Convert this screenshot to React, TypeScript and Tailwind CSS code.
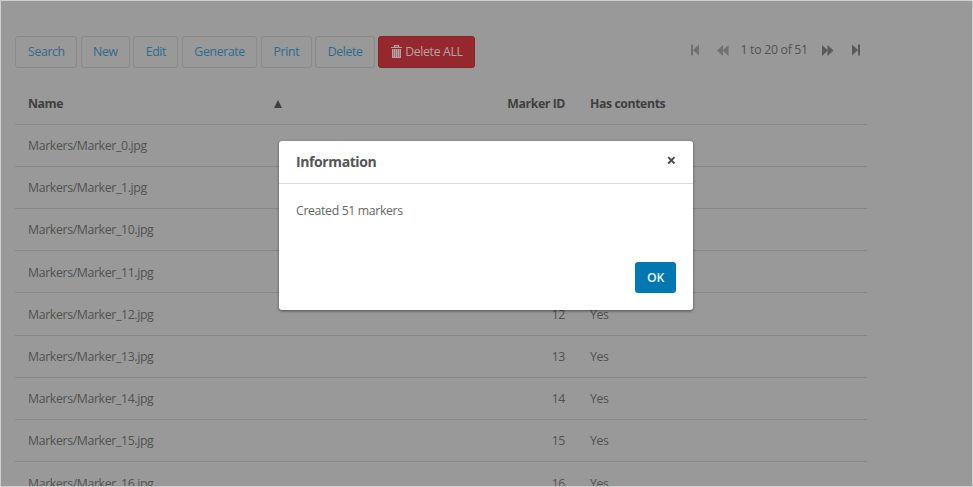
import React from "react";

const BUTTONS = [
  { label: "Search", width: "w-[62px]" },
  { label: "New", width: "w-[49px]" },
  { label: "Edit", width: "w-[45px]" },
  { label: "Generate", width: "w-[75.5px]" },
  { label: "Print", width: "w-[51px]" },
  { label: "Delete", width: "w-[59.5px]" },
];

const ROWS = [0, 1, 10, 11, 12, 13, 14, 15, 16];

function TrashIcon() {
  return (
    <svg className="-mt-0.5" width="11" height="13" viewBox="0 0 11 13" fill="none" stroke="#b5a3a4">
      <path d="M0 2.5h11M3.5 2V0.6h4V2" strokeWidth="1.2" />
      <path d="M1 4h9v9H1z" fill="#a56f75" stroke="none" />
      <path d="M1.5 4v8.5h8V4M3.5 4v8M5.5 4v8M7.5 4v8" />
    </svg>
  );
}

function Pager() {
  return (
    <div className="flex h-8 items-center text-[#515151]">
      <svg className="ml-[21px]" width="8" height="12" viewBox="0 0 8 12" fill="#717171">
        <path d="M0 0.5h2v11H0zM8 0.5v11L2 6z" />
      </svg>
      <svg className="ml-[18px]" width="12" height="11" viewBox="0 0 12 11" fill="#717171">
        <path d="M6 0v11L0 5.5zM11.5 0v11L5.5 5.5z" />
      </svg>
      <span className="ml-[11.5px] w-[67px] whitespace-nowrap pt-px tracking-[-0.3px]">1 to 20 of 51</span>
      <svg className="ml-[15px]" width="12" height="11" viewBox="0 0 12 11" fill="#5a5a5a">
        <path d="M0 0v11l6-5.5zM5.5 0v11l6-5.5z" />
      </svg>
      <svg className="ml-[18px]" width="8" height="12" viewBox="0 0 8 12" fill="#5a5a5a">
        <path d="M6 0.5H8v11H6zM0 0.5v11l6-5.5z" />
      </svg>
    </div>
  );
}

function Dialog() {
  return (
    <div className="absolute left-[278px] top-[140px] h-[169px] w-[414px] rounded-[3px] bg-white text-[#666] shadow-[0_1px_3px_rgba(0,0,0,0.5)]">
      <div className="flex h-[43px] items-center justify-between border-b border-[#dcdcdc] pl-[17px] pr-[17px]">
        <h2 className="-mt-0.5 text-[14px] font-bold tracking-[-0.4px] text-[#555]">Information</h2>
        <svg className="-mt-1" width="9" height="9" viewBox="0 0 9 9" stroke="#4a4a4a" strokeWidth="1.9">
          <path d="M1.2 1.2l6.3 6.3M7.5 1.2L1.2 7.5" />
        </svg>
      </div>
      <p className="px-[17px] pt-[18px] leading-[18px]">Created 51 markers</p>
      <div className="mt-[42px] flex justify-end pr-[17px]">
        <button className="h-[31px] w-[41px] rounded-[3px] bg-[#0377b1] pt-px font-semibold text-[#e5f1f7]">OK</button>
      </div>
    </div>
  );
}

export default function App() {
  return (
    <div className="relative h-[487px] w-[973px] overflow-hidden border border-[#cfcfcf] bg-[#999] font-['Open_Sans',sans-serif] text-[12.3px] tracking-[-0.36px] text-[#515151]">
      <div className="ml-[14.4px] w-[851.6px] pt-[35px]">
        <div className="flex h-8 justify-between">
          <div className="flex gap-[3.5px]">
            {BUTTONS.map((b) => (
              <button key={b.label} className={`${b.width} h-8 rounded-[3px] border border-[#8b8b8b] text-[#306a8c]`}>
                {b.label}
              </button>
            ))}
            <button className="flex h-8 w-[97px] items-center justify-center gap-[3px] rounded-[3px] border border-[#82262b] bg-[#95282e] text-[#b5a3a4]">
              <TrashIcon />
              <span className="whitespace-nowrap">Delete ALL</span>
            </button>
          </div>
          <div className="-mt-0.5 w-[197px]">
            <Pager />
          </div>
        </div>
        <table className="mt-[14px] w-full table-fixed border-collapse">
          <colgroup>
            <col className="w-[246px]" />
            <col className="w-[317px]" />
            <col />
          </colgroup>
          <thead>
            <tr className="h-[42.2px] border-b border-[#868686] tracking-[-0.42px] text-[#404040]">
              <th className="pl-[12.6px] pt-0.5 text-left">Name</th>
              <th className="pr-[13.4px] pt-0.5">
                <div className="flex items-center justify-between">
                  <svg className="ml-[13px]" width="8" height="8" viewBox="0 0 8 8" fill="#404040">
                    <path d="M4 0l4 8H0z" />
                  </svg>
                  <span>Marker ID</span>
                </div>
              </th>
              <th className="pl-[11.6px] pt-0.5 text-left">Has contents</th>
            </tr>
          </thead>
          <tbody>
            {ROWS.map((n) => (
              <tr key={n} className="h-[42.2px] border-b border-[#868686]">
                <td className="pl-[12.6px] pt-0.5">Markers/Marker_{n}.jpg</td>
                <td className="pr-[13.4px] pt-0.5 text-right">{n}</td>
                <td className="pl-[11.6px] pt-0.5">Yes</td>
              </tr>
            ))}
          </tbody>
        </table>
      </div>
      <Dialog />
    </div>
  );
}
